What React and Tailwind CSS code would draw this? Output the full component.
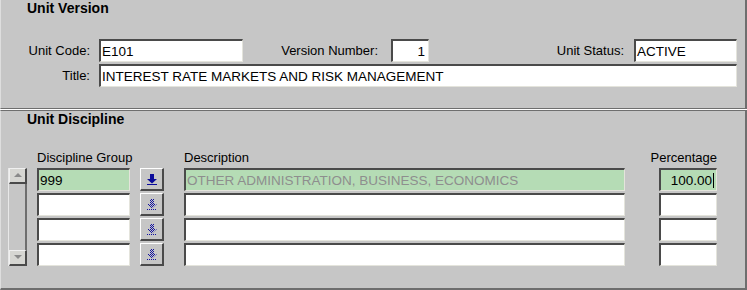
import React from 'react';

const font = { fontFamily: '"Liberation Sans", Arial, sans-serif' };

function Field({ value = '', className = '', bg = 'bg-white', align = 'left', muted = false, cursor = false }) {
  return (
    <div
      className={`h-[23px] shrink-0 flex items-center border-t-2 border-l-2 border-t-[#4a4a4a] border-l-[#4a4a4a] border-b border-r border-b-[#e4e4dc] border-r-[#e4e4dc] px-[1px] text-[13.5px] leading-[15px] whitespace-nowrap overflow-hidden ${bg} ${align === 'right' ? 'justify-end' : ''} ${muted ? 'text-[#8e8e8e]' : 'text-black'} ${className}`}
    >
      <span>{value}</span>
      {cursor && <span className="w-px h-[15px] bg-black ml-[1px]" />}
    </div>
  );
}

function ArrowButton({ enabled }) {
  return (
    <div className="w-[24px] h-[23px] shrink-0 flex items-center justify-center border-t border-l border-white border-b-2 border-r-2 border-b-[#4a4a4a] border-r-[#4a4a4a] bg-[#c6c6c6]">
      <svg width="10" height="11" viewBox="0 0 10 11">
        <defs>
          <pattern id="dots" width="2" height="2" patternUnits="userSpaceOnUse">
            <rect x="0" y="0" width="1" height="1" fill="#1010a0" />
            <rect x="1" y="1" width="1" height="1" fill="#1010a0" />
          </pattern>
        </defs>
        {enabled ? (
          <g fill="#0a0a9a">
            <rect x="3" y="0" width="4" height="5" />
            <polygon points="0,5 10,5 5,9.5" />
            <rect x="0" y="10" width="10" height="1" />
          </g>
        ) : (
          <g fill="url(#dots)">
            <rect x="3" y="0" width="4" height="5" />
            <polygon points="0,5 10,5 5,9.5" />
            <rect x="0" y="10" width="10" height="1" />
          </g>
        )}
      </svg>
    </div>
  );
}

function ScrollButton({ up }) {
  return (
    <div className="w-[18px] h-[16px] shrink-0 flex items-center justify-center bg-[#d6d6d2] border-t border-l border-[#f0f0f0] border-b-2 border-r-2 border-b-[#4a4a4a] border-r-[#4a4a4a]">
      <svg width="8" height="5" viewBox="0 0 8 5">
        {up ? <polygon points="0,4 8,4 4,0" fill="#8a8a8a" /> : <polygon points="0,0 8,0 4,4" fill="#8a8a8a" />}
      </svg>
    </div>
  );
}

const rows = [
  { group: '999', desc: 'OTHER ADMINISTRATION, BUSINESS, ECONOMICS', pct: '100.00', active: true },
  { group: '', desc: '', pct: '' },
  { group: '', desc: '', pct: '' },
  { group: '', desc: '', pct: '' },
];

export default function App() {
  return (
    <div className="w-[747px] h-[290px] bg-[#c6c6c6] text-black overflow-hidden" style={font}>
      {/* Unit Version block */}
      <div className="h-[109px] border-l border-l-[#dedede] border-r-2 border-b border-r-[#6e6e6e] border-b-[#6e6e6e]">
        <div className="pl-[26px] text-[14px] leading-[16px] font-bold">Unit Version</div>

        <div className="mt-[23px] flex items-center text-[13px] leading-[15px]">
          <div className="w-[89px] text-right">Unit Code:</div>
          <Field value="E101" className="ml-[9px] w-[144px]" />
          <div className="w-[135px] text-right">Version Number:</div>
          <Field value="1" align="right" className="ml-[13px] w-[38px] pr-[3px]" />
          <div className="w-[195px] text-right">Unit Status:</div>
          <Field value="ACTIVE" className="ml-[10px] w-[103px]" />
        </div>

        <div className="mt-[2px] flex items-center text-[13px] leading-[15px]">
          <div className="w-[89px] text-right">Title:</div>
          <Field value="INTEREST RATE MARKETS AND RISK MANAGEMENT" className="ml-[9px] w-[638px]" />
        </div>
      </div>

      <div className="h-px bg-white" />

      {/* Unit Discipline block */}
      <div className="h-[180px] border-t border-l border-t-[#6e6e6e] border-l-[#dedede] border-r-2 border-b-2 border-r-[#6e6e6e] border-b-[#6e6e6e]">
        <div className="pl-[26px] text-[14px] leading-[16px] font-bold">Unit Discipline</div>

        <div className="mt-[23px] flex text-[13px] leading-[15px]">
          <div className="ml-[36px] w-[147px]">Discipline Group</div>
          <div className="w-[463px]">Description</div>
          <div className="w-[70px] text-right">Percentage</div>
        </div>

        <div className="mt-[3px] flex">
          <div className="ml-[7px] w-[19px] h-[98px] flex flex-col border-l border-l-[#e8e8e8] border-r-2 border-r-[#6e6e6e]">
            <ScrollButton up />
            <div className="flex-1" />
            <ScrollButton />
          </div>

          <div className="ml-[10px] flex flex-col gap-[2px]">
            {rows.map((r, i) => (
              <div key={i} className="flex items-center">
                <Field value={r.group} bg={r.active ? 'bg-[#b5dcb5]' : 'bg-white'} className="w-[93px]" />
                <div className="ml-[10px]">
                  <ArrowButton enabled={r.active} />
                </div>
                <Field
                  value={r.desc}
                  muted
                  bg={r.active ? 'bg-[#b5dcb5]' : 'bg-white'}
                  className="ml-[20px] w-[441px]"
                />
                <Field
                  value={r.pct}
                  align="right"
                  cursor={r.active}
                  bg={r.active ? 'bg-[#b5dcb5]' : 'bg-white'}
                  className="ml-[34px] w-[58px] pr-[2px]"
                />
              </div>
            ))}
          </div>
        </div>
      </div>
    </div>
  );
}
